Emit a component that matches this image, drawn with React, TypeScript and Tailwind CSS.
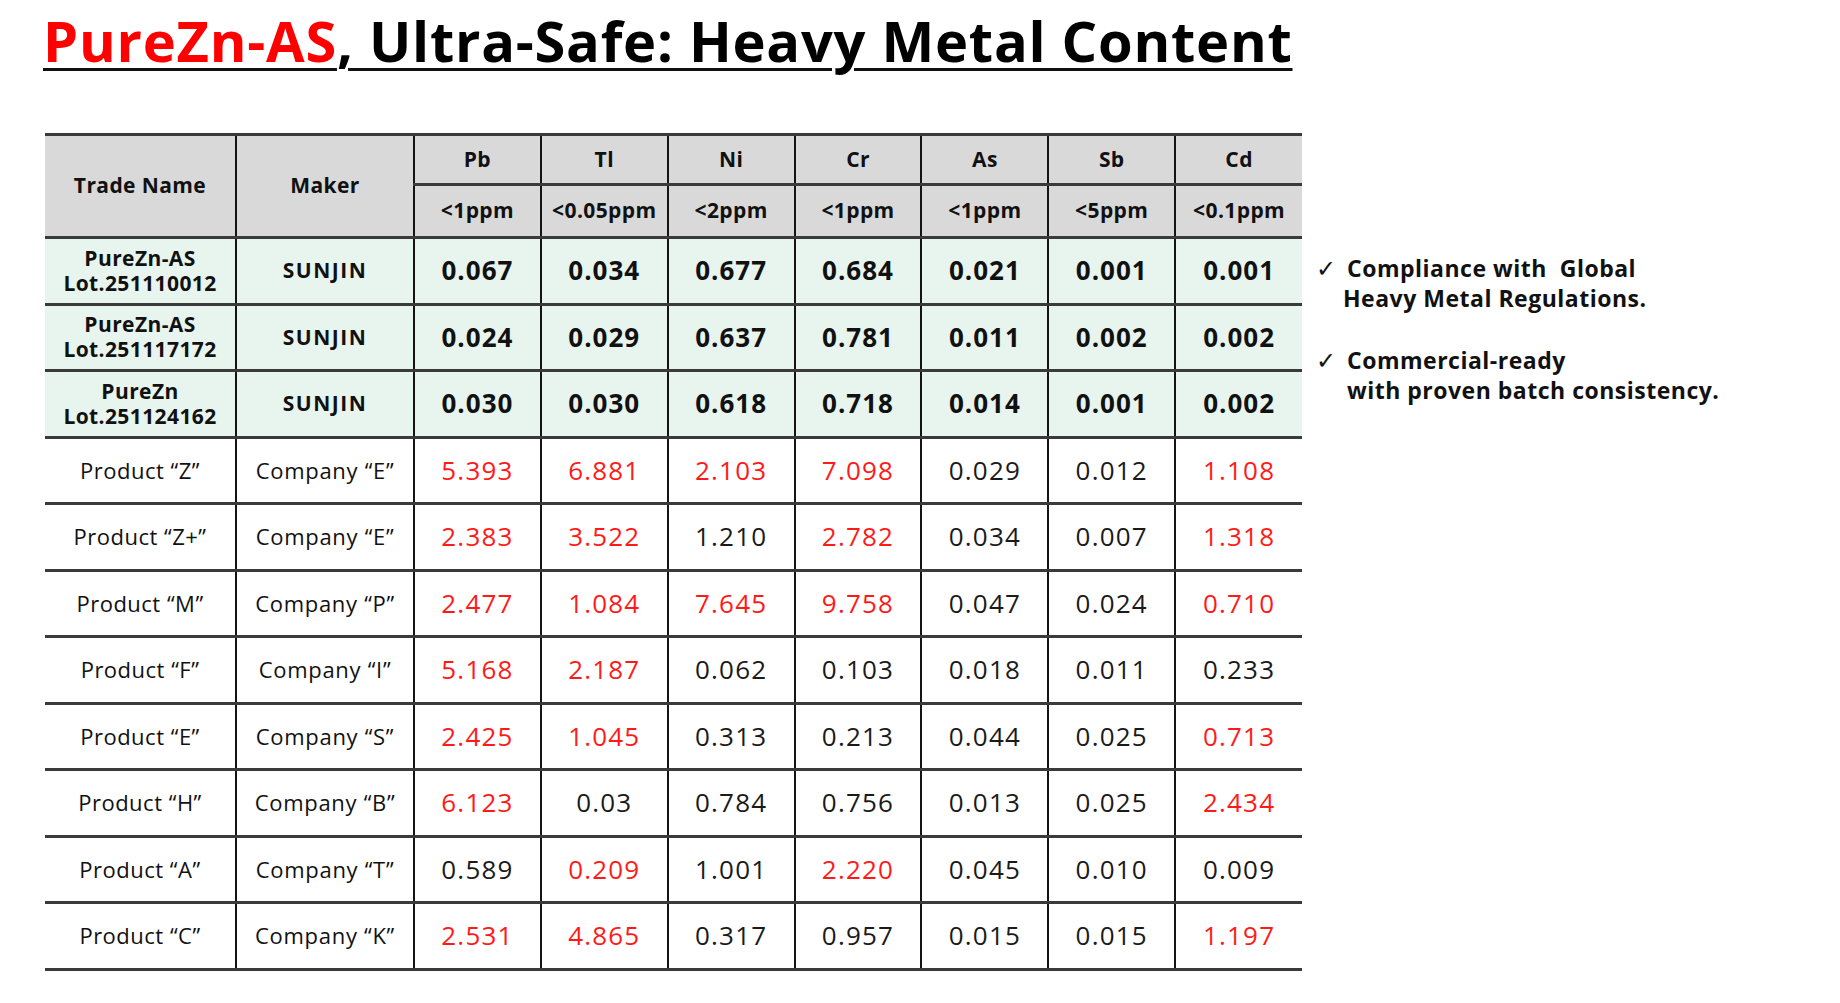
import React from "react";

// element columns: symbol + limit
const ELEMENTS = [
  { sym: "Pb", limit: "<1ppm" },
  { sym: "Tl", limit: "<0.05ppm" },
  { sym: "Ni", limit: "<2ppm" },
  { sym: "Cr", limit: "<1ppm" },
  { sym: "As", limit: "<1ppm" },
  { sym: "Sb", limit: "<5ppm" },
  { sym: "Cd", limit: "<0.1ppm" },
];

const OURS = [
  { name: "PureZn-AS", lot: "Lot.251110012", values: ["0.067", "0.034", "0.677", "0.684", "0.021", "0.001", "0.001"] },
  { name: "PureZn-AS", lot: "Lot.251117172", values: ["0.024", "0.029", "0.637", "0.781", "0.011", "0.002", "0.002"] },
  { name: "PureZn", lot: "Lot.251124162", values: ["0.030", "0.030", "0.618", "0.718", "0.014", "0.001", "0.002"] },
];

// "*" marks a value shown in red
const OTHERS = [
  { name: "Product “Z”", maker: "Company “E”", values: ["5.393*", "6.881*", "2.103*", "7.098*", "0.029", "0.012", "1.108*"] },
  { name: "Product “Z+”", maker: "Company “E”", values: ["2.383*", "3.522*", "1.210", "2.782*", "0.034", "0.007", "1.318*"] },
  { name: "Product “M”", maker: "Company “P”", values: ["2.477*", "1.084*", "7.645*", "9.758*", "0.047", "0.024", "0.710*"] },
  { name: "Product “F”", maker: "Company “I”", values: ["5.168*", "2.187*", "0.062", "0.103", "0.018", "0.011", "0.233"] },
  { name: "Product “E”", maker: "Company “S”", values: ["2.425*", "1.045*", "0.313", "0.213", "0.044", "0.025", "0.713*"] },
  { name: "Product “H”", maker: "Company “B”", values: ["6.123*", "0.03", "0.784", "0.756", "0.013", "0.025", "2.434*"] },
  { name: "Product “A”", maker: "Company “T”", values: ["0.589", "0.209*", "1.001", "2.220*", "0.045", "0.010", "0.009"] },
  { name: "Product “C”", maker: "Company “K”", values: ["2.531*", "4.865*", "0.317", "0.957", "0.015", "0.015", "1.197*"] },
];

const cell = "border-b-[3px] border-b-[#3a3a3a] border-r-2 border-r-[#141414] text-center align-middle p-0 whitespace-nowrap";
const lastCell = "border-b-[3px] border-b-[#3a3a3a] text-center align-middle p-0 whitespace-nowrap";

const App: React.FC = () => {
  return (
    <div className="min-h-screen bg-white pl-[43px] pt-[12px] font-['Open_Sans','Noto_Sans',sans-serif] text-[#111]">
      {/* Title */}
      <h1 className="text-[56px] leading-none font-bold tracking-[0.75px] underline decoration-[3px] underline-offset-[6px]">
        <span className="text-[#ff0000]">PureZn-AS</span>
        <span className="text-black">, Ultra-Safe: Heavy Metal Content</span>
      </h1>

      <div className="flex items-start mt-[65px]">
        {/* Comparison table */}
        <table className="ml-[2px] table-fixed border-collapse w-[1257px]">
          <colgroup>
            <col className="w-[191px]" />
            <col className="w-[178px]" />
            {ELEMENTS.map((e) => (
              <col key={e.sym} className="w-[126.86px]" />
            ))}
          </colgroup>
          <thead className="bg-[#d9d9d9] font-bold text-[21px] tracking-[0.4px]">
            <tr className="h-[50px] border-t-[3px] border-t-[#3a3a3a]">
              <th rowSpan={2} className={cell}>Trade Name</th>
              <th rowSpan={2} className={cell}>Maker</th>
              {ELEMENTS.map((e, i) => (
                <th key={e.sym} className={i === ELEMENTS.length - 1 ? lastCell : cell}>
                  {e.sym}
                </th>
              ))}
            </tr>
            <tr className="h-[53px]">
              {ELEMENTS.map((e, i) => (
                <th key={e.sym} className={i === ELEMENTS.length - 1 ? lastCell : cell}>
                  {e.limit}
                </th>
              ))}
            </tr>
          </thead>
          <tbody>
            {OURS.map((row) => (
              <tr key={row.lot} className="h-[66.5px] bg-[#e8f5ee] font-bold">
                <td className={`${cell} text-[21px] leading-[25px] tracking-[0.4px]`}>
                  <div>{row.name}</div>
                  <div>{row.lot}</div>
                </td>
                <td className={`${cell} text-[21px] tracking-[1.5px]`}>SUNJIN</td>
                {row.values.map((v, i) => (
                  <td key={i} className={`${i === row.values.length - 1 ? lastCell : cell} text-[26px] tracking-[1px]`}>
                    {v}
                  </td>
                ))}
              </tr>
            ))}
            {OTHERS.map((row) => (
              <tr key={row.name} className="h-[66.5px] bg-white">
                <td className={`${cell} text-[22px] tracking-[0.5px]`}>{row.name}</td>
                <td className={`${cell} text-[22px] tracking-[0.7px]`}>{row.maker}</td>
                {row.values.map((v, i) => {
                  const red = v.endsWith("*");
                  return (
                    <td
                      key={i}
                      className={`${i === row.values.length - 1 ? lastCell : cell} text-[26px] tracking-[1.2px] ${red ? "text-[#ff1a1a]" : "text-[#1a1a1a]"}`}
                    >
                      {red ? v.slice(0, -1) : v}
                    </td>
                  );
                })}
              </tr>
            ))}
          </tbody>
        </table>

        {/* Key points */}
        <div className="ml-[14px] mt-[120px] flex flex-col gap-[32px] text-[23px] leading-[30px] tracking-[0.5px] font-bold text-[#111]">
          <div className="flex">
            <span className="w-[31px] font-normal text-[24px]">✓</span>
            <div>
              <div>Compliance with&nbsp;&nbsp;Global</div>
              <div className="-ml-[4px]">Heavy Metal Regulations.</div>
            </div>
          </div>
          <div className="flex">
            <span className="w-[31px] font-normal text-[24px]">✓</span>
            <div>
              <div>Commercial-ready</div>
              <div>with proven batch consistency.</div>
            </div>
          </div>
        </div>
      </div>
    </div>
  );
};

export default App;
